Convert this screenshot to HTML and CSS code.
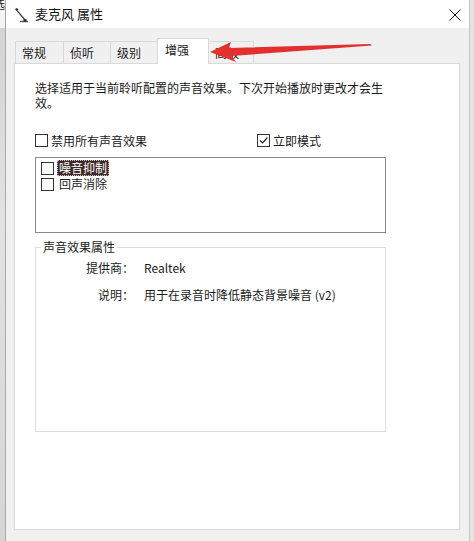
FILE: index.html
```html
<!DOCTYPE html>
<html lang="zh-CN">
<head>
<meta charset="utf-8">
<title>麦克风 属性</title>
<link rel="stylesheet" href="styles.css">
</head>
<body>
<div class="screen">
  <div class="bgwin"><div class="bgtop"><span class="bgchar">选</span></div></div>
  <div class="dialog">
    <div class="titlebar">
      <svg class="appicon" width="15" height="18" viewBox="0 0 15 18">
        <path d="M1 3 L3 2 L4.5 4 L2.5 5 Z" fill="#2a2a2a"/>
        <path d="M3 4.5 L11 14" stroke="#444" stroke-width="1.2" fill="none"/>
        <path d="M6 15.5 L14 15.5" stroke="#555" stroke-width="1.4" fill="none"/>
        <rect x="9.5" y="13" width="3" height="3" fill="#333"/>
      </svg>
      <span class="title">麦克风 属性</span>
      <svg class="close" width="12" height="12" viewBox="0 0 12 12">
        <path d="M0.5 0.5 L11.5 11.5 M11.5 0.5 L0.5 11.5" stroke="#111" stroke-width="1" fill="none"/>
      </svg>
    </div>
    <div class="tabs">
      <div class="tab w1">常规</div>
      <div class="tab w2">侦听</div>
      <div class="tab w3">级别</div>
      <div class="tab w4 active">增强</div>
      <div class="tab w5">高级</div>
    </div>
    <div class="panel">
      <p class="desc">选择适用于当前聆听配置的声音效果。下次开始播放时更改才会生效。</p>
      <div class="options">
        <div class="check"><span class="box"></span><span>禁用所有声音效果</span></div>
        <div class="check"><span class="box"><svg width="11" height="11" viewBox="0 0 11 11"><path d="M2 5.5 L4.5 8 L9.5 2.5" stroke="#222" stroke-width="1.2" fill="none"/></svg></span><span>立即模式</span></div>
      </div>
      <div class="listbox">
        <div class="item"><span class="box"></span><span class="itext selected">噪音抑制</span></div>
        <div class="item"><span class="box"></span><span class="itext">回声消除</span></div>
      </div>
      <fieldset class="props">
        <legend>声音效果属性</legend>
        <div class="proprow first"><span class="plabel">提供商：</span><span class="pval">Realtek</span></div>
        <div class="proprow"><span class="plabel">说明：</span><span class="pval">用于在录音时降低静态背景噪音 (v2)</span></div>
      </fieldset>
    </div>
  </div>
  <div class="bgright"></div>
  <svg class="arrow" width="172" height="28" viewBox="0 0 172 28">
    <polygon points="5,14 26,4 24,10 165,6 167,7.5 26,18 31,24" fill="#e3302f"/>
  </svg>
</div>
</body>
</html>
```

FILE: styles.css
```css
* { box-sizing: border-box; }
html, body { margin: 0; padding: 0; }
body {
  background: #e8e8e8;
  font-family: "Noto Sans CJK SC", "Noto Sans", sans-serif;
  font-size: 12px;
  color: #1a1a1a;
}
.screen {
  position: relative;
  display: flex;
  width: 474px;
  height: 541px;
  overflow: hidden;
}
.bgwin {
  width: 5px;
  flex: none;
  background: linear-gradient(#d2d2d2, #e2e2e2 40%, #d6d6d6);
  overflow: hidden;
}
.bgtop {
  height: 28px;
  background: #f4f4f4;
  overflow: hidden;
}
.bgchar {
  display: block;
  margin-left: -7px;
  margin-top: -3px;
  font-size: 12px;
  line-height: 14px;
  color: #222;
}
.dialog {
  width: 465px;
  flex: none;
  background: #f0f0f0;
  border-left: 1px solid #a9a9a9;
  border-right: 1px solid #c4c4c4;
  display: flex;
  flex-direction: column;
}
.bgright {
  flex: 1;
  background: #e4e4e4;
}
.titlebar {
  height: 28px;
  background: #ffffff;
  display: flex;
  align-items: center;
  padding-left: 8px;
  padding-right: 8px;
}
.appicon { flex: none; margin-top: 2px; }
.title {
  margin-left: 6px;
  font-size: 13px;
  line-height: 16px;
  color: #111;
  flex: 1;
}
.close { flex: none; margin-top: 2px; }
.tabs {
  height: 35px;
  display: flex;
  align-items: flex-end;
  padding-left: 9px;
}
.tab {
  height: 22px;
  line-height: 21px;
  border: 1px solid #d9d9d9;
  border-bottom: none;
  background: #f0f0f0;
  padding: 0 6px;
  margin-left: -1px;
  white-space: nowrap;
  color: #1a1a1a;
}
.tab.w1 { width: 49px; margin-left: 0; }
.tab.w2 { width: 48px; }
.tab.w3 { width: 48px; }
.tab.w4 { width: 52px; }
.tab.w5 { width: 46px; }
.tab.active {
  position: relative;
  z-index: 1;
  height: 26px;
  margin-bottom: -1px;
  background: #ffffff;
  padding-left: 7px;
  padding-bottom: 4px;
}
.panel {
  margin-left: 8px;
  width: 446px;
  height: 467px;
  background: #ffffff;
  border: 1px solid #d9d9d9;
  padding: 16px 0 0 20px;
}
.desc {
  margin: 0;
  width: 351px;
  line-height: 15px;
}
.options {
  margin-top: 23px;
  display: grid;
  grid-template-columns: 222px 1fr;
  line-height: 15px;
}
.check {
  display: flex;
  align-items: center;
}
.box {
  width: 13px;
  height: 13px;
  flex: none;
  border: 1px solid #333;
  background: #fff;
  margin-right: 3px;
  display: flex;
  align-items: center;
  justify-content: center;
}
.listbox {
  margin-top: 9px;
  width: 351px;
  height: 76px;
  border: 1px solid #8a8a8a;
  padding: 2px 0 0 5px;
}
.item {
  height: 16px;
  display: flex;
  align-items: center;
}
.itext {
  padding: 0 2px;
  line-height: 16px;
}
.itext.selected {
  background: #3d2a2a;
  color: #ffffff;
  outline: 1px dotted #d8c8c8;
  outline-offset: -1px;
}
.props {
  margin: 7px 0 0 0;
  width: 351px;
  height: 192px;
  border: 1px solid #dcdcdc;
  padding: 0;
  min-width: 0;
}
.props legend {
  margin-left: 5px;
  padding: 0 2px;
  line-height: 14px;
}
.proprow {
  display: grid;
  grid-template-columns: 98px 1fr;
  column-gap: 10px;
  line-height: 15px;
  margin-top: 12px;
}
.proprow.first { margin-top: 6px; }
.plabel { text-align: right; }
.arrow {
  position: absolute;
  left: 205px;
  top: 38px;
  pointer-events: none;
  z-index: 5;
}
```
